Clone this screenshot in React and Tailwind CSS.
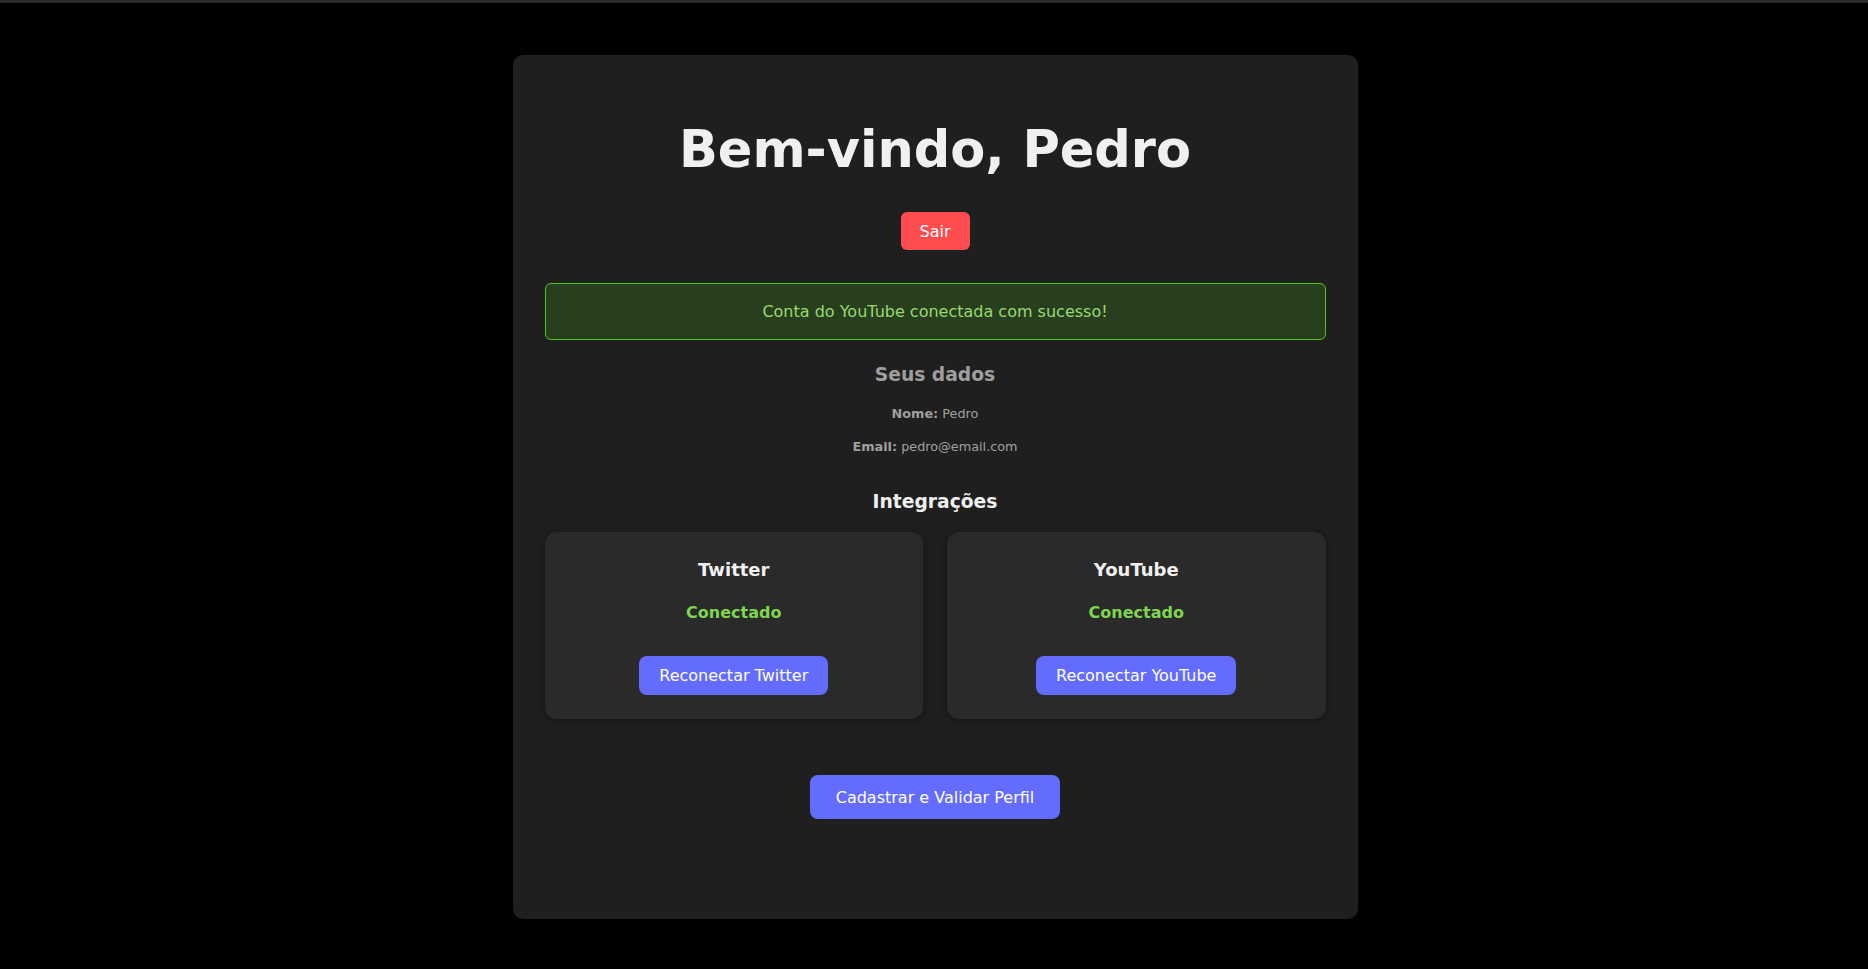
export default function App() {
  const font = { fontFamily: '"DejaVu Sans", "Liberation Sans", sans-serif' };
  const IntegrationCard = ({ title, button }) => (
    <div className="bg-[#2a2a2a] rounded-[12px] h-[187px] pt-[27px] flex flex-col items-center shadow-[0_2px_10px_rgba(0,0,0,0.35)]">
      <div className="text-[18px] leading-[21px] font-bold text-[#f0f0f0]">{title}</div>
      <div className="mt-[23px] text-[16px] leading-[19px] font-bold text-[#7fd650]">Conectado</div>
      <button className="mt-[34px] h-[39px] px-[20px] rounded-[8px] bg-[#646cff] text-white text-[16px] leading-[19px] flex items-center justify-center">
        {button}
      </button>
    </div>
  );
  return (
    <div style={font} className="min-h-screen bg-black border-t-[3px] border-[#2a2a2a] pt-[52px] pb-[50px] pl-[2px]">
      <div className="mx-auto w-[845px] h-[864px] bg-[#1f1f1f] rounded-[10px] px-8 pt-[65px] flex flex-col items-center text-center">
        <h1 className="text-[51px] leading-[60px] font-bold text-[#f0f0f0]">Bem-vindo, Pedro</h1>
        <button className="mt-[32px] h-[38px] w-[69px] rounded-[6px] bg-[#ff4d4f] text-white text-[16px] leading-[19px] flex items-center justify-center">
          Sair
        </button>
        <div className="mt-[33px] w-full h-[57px] rounded-[6px] border border-[#52c41a] bg-[#283f1f] text-[#9bd86c] text-[16px] leading-[19px] flex items-center justify-center">
          Conta do YouTube conectada com sucesso!
        </div>
        <h3 className="mt-[24px] text-[18.72px] leading-[22px] font-bold text-[#9e9e9e]">Seus dados</h3>
        <p className="mt-[20px] text-[12.8px] leading-[15px] text-[#a0a0a0]">
          <span className="font-bold">Nome:</span> Pedro
        </p>
        <p className="mt-[18px] text-[12.8px] leading-[15px] text-[#a0a0a0]">
          <span className="font-bold">Email:</span> pedro@email.com
        </p>
        <h3 className="mt-[37px] text-[18.72px] leading-[22px] font-bold text-[#f0f0f0]">Integrações</h3>
        <div className="mt-[19px] w-full grid grid-cols-2 gap-6">
          <IntegrationCard title="Twitter" button="Reconectar Twitter" />
          <IntegrationCard title="YouTube" button="Reconectar YouTube" />
        </div>
        <button className="mt-[56px] h-[44px] w-[250px] rounded-[8px] bg-[#646cff] text-white text-[16px] leading-[19px] flex items-center justify-center">
          Cadastrar e Validar Perfil
        </button>
      </div>
    </div>
  );
}
